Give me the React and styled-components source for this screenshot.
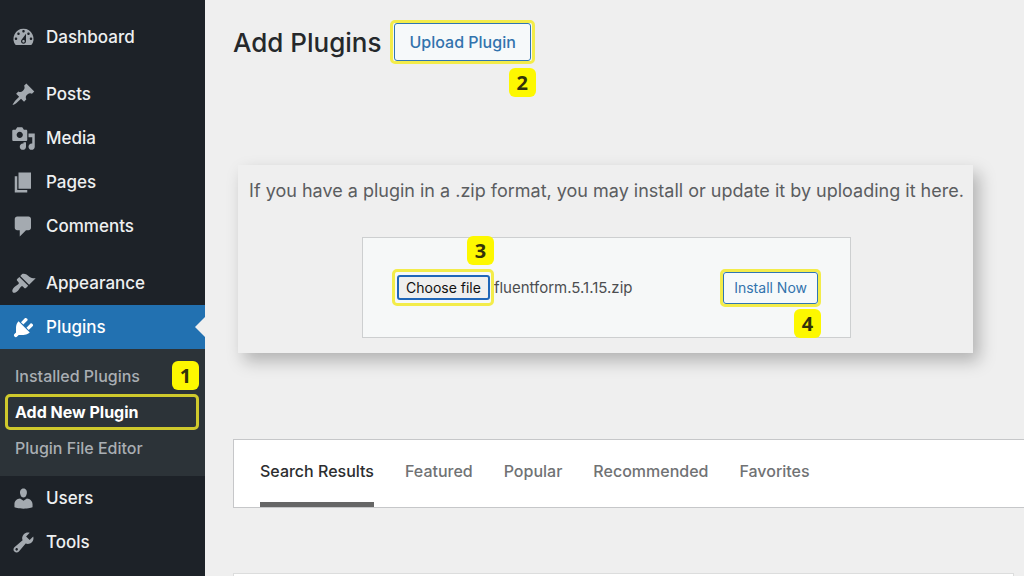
import React, { useRef, useState } from "react";
import styled, { createGlobalStyle } from "styled-components";

const GlobalStyle = createGlobalStyle`
  * {
    box-sizing: border-box;
  }

  body {
    margin: 0;
    background: #efefef;
    font-family: Inter, "Liberation Sans", sans-serif;
  }

  a {
    text-decoration: none;
  }
`;

const Page = styled.div`
  display: flex;
  height: 100vh;
  overflow: hidden;
`;

const Sidebar = styled.nav`
  flex: none;
  width: 205px;
  padding-top: 15px;
  background: #1d2228;
`;

const MenuList = styled.ul`
  margin: 0;
  padding: 0;
  list-style: none;
`;

const MenuItem = styled.li`
  margin-top: ${props => (props.$spaced ? "13px" : "0")};
`;

const MenuLink = styled.a`
  position: relative;
  display: flex;
  align-items: center;
  gap: 10px;
  height: 44px;
  padding-left: 11px;
  background: ${props => (props.$active ? "#2271b1" : "transparent")};
  color: ${props => (props.$active ? "#ffffff" : "#eef0f1")};
  font-size: 17px;
  font-weight: 500;

  svg {
    width: 25px;
    height: 25px;
    fill: ${props => (props.$active ? "#ffffff" : "#a4aab0")};
  }
`;

const ActiveArrow = styled.span`
  position: absolute;
  right: 0;
  top: 12px;
  border: 10px solid transparent;
  border-right-color: #efefef;
  border-left-width: 0;
`;

const SubMenu = styled.ul`
  margin: 0;
  padding: 9px 6px 10px 5px;
  list-style: none;
  background: #2c3338;
`;

const SubMenuItem = styled.li`
  position: relative;
`;

const SubMenuLink = styled.a`
  display: flex;
  align-items: center;
  height: 36px;
  padding-left: 7px;
  border: 3px solid ${props => (props.$current ? "#cfc92c" : "transparent")};
  border-radius: 5px;
  color: ${props => (props.$current ? "#ffffff" : "#a9aeb3")};
  font-size: 16px;
  font-weight: ${props => (props.$current ? 700 : 500)};
`;

const Step = styled.span`
  position: absolute;
  right: ${props => props.$right || "0"};
  top: ${props => props.$top};
  display: flex;
  align-items: center;
  justify-content: center;
  width: 27px;
  height: 29px;
  border-radius: 6px;
  background: #fdf800;
  color: #33330a;
  font-family: "Noto Sans", sans-serif;
  font-size: 20px;
  font-weight: 700;
`;

const Main = styled.main`
  flex: 1;
  min-width: 0;
  padding: 20px 0 0 28px;
`;

const Header = styled.header`
  display: flex;
  align-items: center;
  gap: 9px;
`;

const Title = styled.h1`
  margin: 0;
  color: #25282b;
  font-size: 26px;
  font-weight: 500;
`;

const Highlight = styled.div`
  position: relative;
  padding: ${props => props.$padding || "0"};
  border: 3px solid #f3ec4a;
  border-radius: 5px;
  background: #f6f9f9;
`;

const OutlineButton = styled.button`
  display: block;
  height: ${props => (props.$large ? "38px" : "32px")};
  padding: 0 ${props => (props.$large ? "14px" : "10px")};
  border: 1px solid #2f76b3;
  border-radius: 3px;
  background: #f6f9fa;
  color: #3273ad;
  font-family: inherit;
  font-size: ${props => (props.$large ? "16px" : "14px")};
  font-weight: ${props => (props.$large ? 500 : 400)};
  white-space: nowrap;
  cursor: pointer;
`;

const FileButton = styled.button`
  display: block;
  height: 25px;
  padding: 0 7px;
  border: 2px solid #1f66b8;
  border-radius: 3px;
  background: #efefef;
  color: #111111;
  font-family: inherit;
  font-size: 14px;
  white-space: nowrap;
  cursor: pointer;
`;

const UploadPanel = styled.section`
  margin: 101px 51px 0 5px;
  padding: 12px 7px 15px 9px;
  background: #efefef;
  box-shadow: 6px 8px 16px rgba(0, 0, 0, 0.26);
`;

const UploadHelp = styled.p`
  margin: 0;
  color: #5b5d5f;
  font-size: 18px;
  line-height: 28px;
  text-align: center;
  white-space: nowrap;
`;

const UploadForm = styled.form`
  display: flex;
  align-items: center;
  justify-content: space-between;
  max-width: 489px;
  height: 101px;
  margin: 32px auto 0;
  padding: 0 29px;
  border: 1px solid #cdcfd0;
  background: #f6f8f8;
`;

const FileField = styled.div`
  display: flex;
  align-items: center;
`;

const FileName = styled.span`
  color: #4c4e50;
  font-size: 15px;
`;

const TabBar = styled.nav`
  display: flex;
  gap: 31px;
  height: 69px;
  margin-top: 86px;
  padding-left: 26px;
  border: 1px solid #c6c7c9;
  border-right: 0;
  background: #ffffff;
`;

const Tab = styled.a`
  display: flex;
  align-items: center;
  border-top: 5px solid transparent;
  border-bottom: 5px solid ${props => (props.$current ? "#666666" : "transparent")};
  padding-bottom: 5px;
  color: ${props => (props.$current ? "#2b2d2f" : "#707274")};
  font-size: 16px;
  font-weight: 500;
  white-space: nowrap;
`;

const ResultCard = styled.div`
  height: 120px;
  margin: 65px 10px 0 0;
  border: 1px solid #dcdddd;
  background: #ffffff;
`;

const icons = {
  dashboard:
    "M3.76 16h12.48A7.998 7.998 0 0 0 10 3a7.998 7.998 0 0 0-6.24 13zM10 4c.55 0 1 .45 1 1s-.45 1-1 1-1-.45-1-1 .45-1 1-1zM6 6c.55 0 1 .45 1 1s-.45 1-1 1-1-.45-1-1 .45-1 1-1zm8 0c.55 0 1 .45 1 1s-.45 1-1 1-1-.45-1-1 .45-1 1-1zm-5.37 5.55L12 7v6c0 1.1-.9 2-2 2s-2-.9-2-2c0-.57.24-1.08.63-1.45zM4 10c.55 0 1 .45 1 1s-.45 1-1 1-1-.45-1-1 .45-1 1-1zm12 0c.55 0 1 .45 1 1s-.45 1-1 1-1-.45-1-1 .45-1 1-1zm-5 3c0-.55-.45-1-1-1s-1 .45-1 1 .45 1 1 1 1-.45 1-1z",
  posts:
    "M10.44 3.02l1.82-1.82 6.36 6.35-1.83 1.82c-1.05-.68-2.48-.57-3.41.36l-.75.75c-.92.93-1.04 2.35-.35 3.41l-1.83 1.82-2.41-2.41-2.8 2.79c-.42.42-3.38 2.71-3.8 2.29s1.86-3.39 2.28-3.81l2.79-2.79L4.1 9.36l1.83-1.82c1.05.69 2.48.57 3.4-.36l.75-.75c.93-.92 1.05-2.35.36-3.41z",
  media:
    "M13 11V4c0-.55-.45-1-1-1h-1.67L9 1H5L3.67 3H2c-.55 0-1 .45-1 1v7c0 .55.45 1 1 1h10c.55 0 1-.45 1-1zM7 4.5c1.38 0 2.5 1.12 2.5 2.5S8.38 9.5 7 9.5 4.5 8.38 4.5 7 5.62 4.5 7 4.5zM14 6h5v10.5c0 1.38-1.12 2.5-2.5 2.5S14 17.88 14 16.5s1.12-2.5 2.5-2.5c.17 0 .34.02.5.05V9h-3V6zm-4 8.05V13h2v3.5c0 1.38-1.12 2.5-2.5 2.5S7 17.88 7 16.5 8.12 14 9.5 14c.17 0 .34.02.5.05z",
  pages: "M6 15V2h10v13H6zm-1 1h8v2H3V5h2v11z",
  comments:
    "M5 2h9c1.1 0 2 .9 2 2v7c0 1.1-.9 2-2 2h-2l-5 5v-5H5c-1.1 0-2-.9-2-2V4c0-1.1.9-2 2-2z",
  appearance:
    "M14.48 11.06L7.41 3.99l1.5-1.5c.5-.56 2.3-.47 3.51.32 1.21.8 1.43 1.28 2.91 2.1 1.18.64 2.45 1.26 4.45.85zm-.71.71L6.7 4.7 4.93 6.47c-.39.39-.39 1.02 0 1.41l1.06 1.06c.39.39.39 1.03 0 1.42-.6.6-1.43 1.11-2.21 1.69-.35.26-.7.53-1.01.84C1.43 14.23.4 16.08 1.4 17.07c.99 1 2.84-.03 4.18-1.36.31-.31.58-.66.85-1.02.57-.78 1.08-1.61 1.69-2.21.39-.39 1.02-.39 1.41 0l1.06 1.06c.39.39 1.02.39 1.41 0z",
  plugins:
    "M13.11 4.36L9.87 7.6 8 5.73l3.24-3.24c.35-.34 1.05-.2 1.56.32.52.51.66 1.21.31 1.55zm-8 1.77l.91-1.12 9.01 9.01-1.19.84c-.71.71-2.63 1.16-3.82 1.16H6.14L4.9 17.26c-.59.59-1.54.59-2.12 0-.59-.58-.59-1.53 0-2.12l1.24-1.24v-3.88c0-1.13.4-3.19 1.09-3.89zm7.26 3.97l3.24-3.24c.34-.35 1.04-.21 1.55.31.52.51.66 1.21.31 1.55l-3.24 3.25z",
  users:
    "M10 9.25c-2.27 0-2.73-3.44-2.73-3.44C7 4.02 7.82 2 9.97 2c2.16 0 2.98 2.02 2.71 3.81 0 0-.41 3.44-2.68 3.44zm0 2.57L12.72 10c2.39 0 4.52 2.33 4.52 4.53v2.49s-3.65 1.13-7.24 1.13c-3.65 0-7.24-1.13-7.24-1.13v-2.49c0-2.25 1.94-4.48 4.47-4.48z",
  tools:
    "M16.68 9.77c-1.34 1.34-3.3 1.67-4.95.99l-5.41 6.52c-.99.99-2.59.99-3.58 0s-.99-2.59 0-3.57l6.52-5.42c-.68-1.65-.35-3.61.99-4.95 1.28-1.28 3.12-1.62 4.72-1.06l-2.89 2.89 2.82 2.82 2.86-2.87c.53 1.58.18 3.39-1.08 4.65zM3.81 16.21c.4.39 1.04.39 1.43 0 .4-.4.4-1.04 0-1.43-.39-.4-1.03-.4-1.43 0-.39.39-.39 1.03 0 1.43z"
};

const menu = [
  { label: "Dashboard", icon: "dashboard" },
  { label: "Posts", icon: "posts", spaced: true },
  { label: "Media", icon: "media" },
  { label: "Pages", icon: "pages" },
  { label: "Comments", icon: "comments" },
  { label: "Appearance", icon: "appearance", spaced: true },
  {
    label: "Plugins",
    icon: "plugins",
    children: [
      { label: "Installed Plugins" },
      { label: "Add New Plugin", current: true, step: 1 },
      { label: "Plugin File Editor" }
    ]
  },
  { label: "Users", icon: "users" },
  { label: "Tools", icon: "tools" }
];

const tabs = [
  "Search Results",
  "Featured",
  "Popular",
  "Recommended",
  "Favorites"
];

const Icon = ({ name }) => (
  <svg viewBox="0 0 20 20" aria-hidden="true">
    <path fillRule="evenodd" d={icons[name]} />
  </svg>
);

const AdminMenu = () => (
  <Sidebar>
    <MenuList>
      {menu.map(item => (
        <MenuItem key={item.label} $spaced={item.spaced}>
          <MenuLink href="#" $active={!!item.children}>
            <Icon name={item.icon} />
            {item.label}
            {item.children && <ActiveArrow />}
          </MenuLink>
          {item.children && (
            <SubMenu>
              {item.children.map(child => (
                <SubMenuItem key={child.label}>
                  <SubMenuLink href="#" $current={child.current}>
                    {child.label}
                  </SubMenuLink>
                  {child.step && <Step $top="-33px">{child.step}</Step>}
                </SubMenuItem>
              ))}
            </SubMenu>
          )}
        </MenuItem>
      ))}
    </MenuList>
  </Sidebar>
);

const Upload = () => {
  const fileInput = useRef(null);
  const [fileName, setFileName] = useState("fluentform.5.1.15.zip");

  const onFileChange = e => {
    const file = e.target.files[0];
    if (file) {
      setFileName(file.name);
    }
  };

  return (
    <UploadPanel>
      <UploadHelp>
        If you have a plugin in a .zip format, you may install or update it by
        uploading it here.
      </UploadHelp>
      <UploadForm onSubmit={e => e.preventDefault()}>
        <FileField>
          <Highlight $padding="3px 1px 3px 2px">
            <FileButton type="button" onClick={() => fileInput.current.click()}>
              Choose file
            </FileButton>
            <Step $top="-36px" $right="-3px">
              3
            </Step>
          </Highlight>
          <input
            ref={fileInput}
            type="file"
            accept=".zip"
            aria-label="Plugin zip file"
            hidden
            onChange={onFileChange}
          />
          <FileName>{fileName}</FileName>
        </FileField>
        <Highlight>
          <OutlineButton type="submit">Install Now</OutlineButton>
          <Step $top="37px" $right="-3px">
            4
          </Step>
        </Highlight>
      </UploadForm>
    </UploadPanel>
  );
};

const App = () => (
  <>
    <GlobalStyle />
    <Page>
      <AdminMenu />
      <Main>
        <Header>
          <Title>Add Plugins</Title>
          <Highlight $padding="0 1px">
            <OutlineButton type="button" $large>
              Upload Plugin
            </OutlineButton>
            <Step $top="45px" $right="-4px">
              2
            </Step>
          </Highlight>
        </Header>
        <Upload />
        <TabBar>
          {tabs.map((tab, i) => (
            <Tab key={tab} href="#" $current={i === 0}>
              {tab}
            </Tab>
          ))}
        </TabBar>
        <ResultCard />
      </Main>
    </Page>
  </>
);

export default App;
